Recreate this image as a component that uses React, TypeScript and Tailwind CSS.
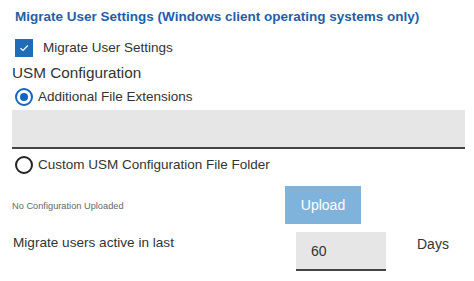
export default function App() {
  return (
    <div
      className="flex w-[474px] flex-col bg-white pt-2 pl-3 text-[#333]"
      style={{ fontFamily: '"Liberation Sans", Arial, sans-serif' }}
    >
      {/* Section heading */}
      <h2 className="ml-[3px] text-[13.5px] leading-[18px] font-bold text-[#1f5fa8]">
        Migrate User Settings (Windows client operating systems only)
      </h2>

      {/* Checkbox */}
      <label className="mt-[13px] ml-[3px] flex h-[18px] items-center gap-[10px]">
        <span className="flex h-[18px] w-[18px] items-center justify-center bg-[#1f6db8]">
          <svg width="10" height="8" viewBox="0 0 10 8" fill="none">
            <path d="M1.5 4.2 L4 6.5 L8.8 1.5" stroke="white" strokeWidth="1.2" />
          </svg>
        </span>
        <span className="text-[13.5px] leading-[18px]">Migrate User Settings</span>
      </label>

      <div className="mt-[6px] text-[15.3px] leading-[20px]">USM Configuration</div>

      {/* Radio: checked */}
      <label className="mt-[5px] ml-[3px] flex h-[18px] items-center gap-[5px]">
        <span className="flex h-[18px] w-[18px] items-center justify-center rounded-full border-2 border-[#1565c0]">
          <span className="h-[8px] w-[8px] rounded-full bg-[#1565c0]" />
        </span>
        <span className="text-[13.5px] leading-[18px]">Additional File Extensions</span>
      </label>

      <div className="mt-[4px] h-[39px] w-[453px] border-b-2 border-[#444] bg-[#e6e6e6]" />

      {/* Radio: unchecked */}
      <label className="mt-[7px] ml-[3px] flex h-[18px] items-center gap-[5px]">
        <span className="h-[18px] w-[18px] rounded-full border-2 border-[#222]" />
        <span className="text-[13.5px] leading-[18px]">Custom USM Configuration File Folder</span>
      </label>

      {/* Upload row */}
      <div className="mt-[12px] flex items-center">
        <span className="w-[273px] pt-[4px] text-[9.25px] text-[#666]">No Configuration Uploaded</span>
        <button
          type="button"
          className="flex h-[38px] w-[76px] items-center justify-center bg-[#7fb3dc] text-[14px] text-white"
        >
          Upload
        </button>
      </div>

      {/* Active users row */}
      <div className="mt-[8px] flex items-start">
        <span className="w-[284px] pt-[3px] pl-px text-[13.6px] leading-[16px]">Migrate users active in last</span>
        <div className="flex h-[39px] w-[90px] items-center border-b-2 border-[#444] bg-[#e6e6e6] px-[15px] pt-[2px] text-[14px]">
          60
        </div>
        <span className="ml-[31px] pt-[4px] text-[14px] leading-[16px]">Days</span>
      </div>
      <div className="h-[10px]" />
    </div>
  );
}
